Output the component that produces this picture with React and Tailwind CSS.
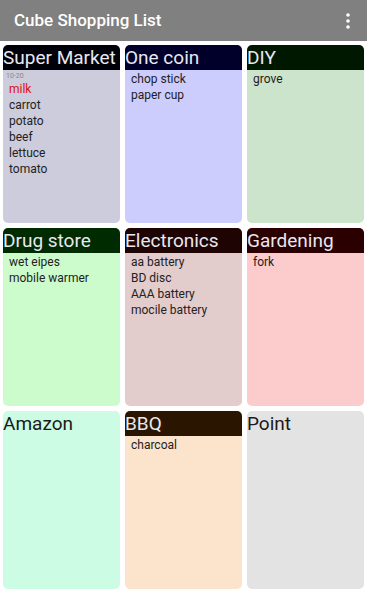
import React from 'react';

const cubes = [
  { name: 'Super Market', bg: 'bg-[#ccccdd]', bar: 'bg-[#000008]', note: '10-20', items: ['milk', 'carrot', 'potato', 'beef', 'lettuce', 'tomato'], hot: 0 },
  { name: 'One coin', bg: 'bg-[#ccccfd]', bar: 'bg-[#00002a]', items: ['chop stick', 'paper cup'] },
  { name: 'DIY', bg: 'bg-[#cce3cc]', bar: 'bg-[#001800]', items: ['grove'] },
  { name: 'Drug store', bg: 'bg-[#ccfccc]', bar: 'bg-[#002a00]', items: ['wet eipes', 'mobile warmer'] },
  { name: 'Electronics', bg: 'bg-[#e3cccc]', bar: 'bg-[#1f0404]', items: ['aa battery', 'BD disc', 'AAA battery', 'mocile battery'] },
  { name: 'Gardening', bg: 'bg-[#fccccc]', bar: 'bg-[#2a0000]', items: ['fork'] },
  { name: 'Amazon', bg: 'bg-[#ccfce3]', items: [] },
  { name: 'BBQ', bg: 'bg-[#fce3cc]', bar: 'bg-[#2a1500]', items: ['charcoal'] },
  { name: 'Point', bg: 'bg-[#e3e3e3]', items: [] },
];

function Cube({ c }) {
  return (
    <div className={`${c.bg} rounded-[5px] overflow-hidden flex flex-col min-h-0`}>
      <div className={`${c.bar || ''} ${c.bar ? 'text-[#e8e8f0]' : 'text-[#1a1a1a]'} text-[19px] leading-[25px] whitespace-nowrap`}>
        {c.name}
      </div>
      <div className="pt-[1px]">
        {c.note && <div className="text-[7px] leading-[10px] text-[#888] pl-[3px]">{c.note}</div>}
        {c.items.map((it, i) => (
          <div key={it} className={`text-[12px] leading-[16px] pl-[6px] ${c.hot === i ? 'text-[#e01010]' : 'text-[#222]'}`}>{it}</div>
        ))}
      </div>
    </div>
  );
}

export default function App() {
  return (
    <div className="w-[367px] h-[592px] bg-white flex flex-col" style={{ fontFamily: 'Roboto, "Noto Sans", sans-serif' }}>
      <div className="h-[41px] bg-[#808080] flex items-center justify-between pl-[14px] pr-[17px] shrink-0">
        <div className="text-white text-[17px] font-medium">Cube Shopping List</div>
        <svg width="4" height="16" viewBox="0 0 4 16">
          <circle cx="2" cy="2" r="1.8" fill="#fff" />
          <circle cx="2" cy="8" r="1.8" fill="#fff" />
          <circle cx="2" cy="14" r="1.8" fill="#fff" />
        </svg>
      </div>
      <div className="flex-1 grid grid-cols-3 grid-rows-3 gap-x-[5px] gap-y-[5px] pt-[4px] px-[3px] pb-[3px] min-h-0">
        {cubes.map(c => <Cube key={c.name} c={c} />)}
      </div>
    </div>
  );
}
